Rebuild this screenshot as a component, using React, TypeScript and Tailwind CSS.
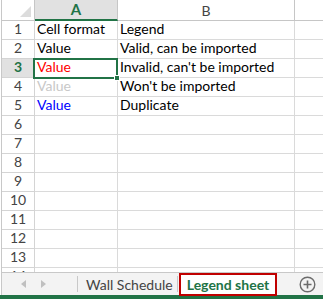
const ROWS: Array<{ a?: string; aColor?: string; b?: string }> = [
  { a: "Cell format", b: "Legend" },
  { a: "Value", b: "Valid, can be imported" },
  { a: "Value", aColor: "text-[#ff0000]", b: "Invalid, can't be imported" },
  { a: "Value", aColor: "text-[#c8c8c8]", b: "Won't be imported" },
  { a: "Value", aColor: "text-[#0000ff]", b: "Duplicate" },
];

const FONT = "font-['Lato','Liberation_Sans',sans-serif]";

function Row({ n }: { n: number }) {
  const r = ROWS[n - 1] || {};
  const active = n === 3;
  return (
    <div className="flex h-[19px] shrink-0">
      <div
        className={`flex w-[33px] items-end justify-center border-b border-r border-[#d4d4d4] pb-[2px] text-[14px] leading-[16px] ${
          active ? "bg-[#e1e1e1] font-bold text-[#217346]" : "text-[#444]"
        }`}
      >
        {n}
      </div>
      <div
        className={`flex w-[83px] items-end overflow-visible whitespace-nowrap border-b border-r border-[#dadada] pb-[2px] pl-[2px] text-[14px] leading-[16px] ${
          r.aColor || "text-black"
        }`}
      >
        {r.a}
      </div>
      <div className="flex w-[177px] items-end whitespace-nowrap border-b border-r border-[#dadada] pb-[2px] pl-[2px] text-[14px] leading-[16px] text-black">
        {r.b}
      </div>
      <div className="flex-1 border-b border-[#dadada]" />
    </div>
  );
}

export default function App() {
  return (
    <div className={`relative h-[299px] w-[323px] overflow-hidden bg-white ${FONT}`}>
      <div className="ml-px h-[272px] overflow-hidden border-l border-[#c8c8c8]">
        {/* column headers */}
        <div className="flex h-[21px]">
          <div className="relative w-[33px] border-b border-r border-[#c6c6c6]">
            <div className="absolute bottom-[3px] right-[3px] h-0 w-0 border-b-[11px] border-l-[11px] border-b-[#dcdcdc] border-l-transparent" />
          </div>
          <div className="flex w-[83px] items-center justify-center border-b-2 border-r border-b-[#217346] border-r-[#c6c6c6] bg-[#e1e1e1] text-[15px] font-bold text-[#217346]">
            A
          </div>
          <div className="flex w-[177px] items-center justify-center border-b border-r border-[#c6c6c6] text-[14px] text-[#444]">
            B
          </div>
          <div className="flex-1 border-b border-[#c6c6c6]" />
        </div>
        {Array.from({ length: 14 }, (_, i) => (
          <Row key={i} n={i + 1} />
        ))}
      </div>

      {/* selected cell A3 */}
      <div className="absolute left-[33px] top-[58px] h-[21px] w-[85px] border-2 border-[#217346]">
        <div className="absolute -bottom-[4px] -right-[4px] h-[6px] w-[6px] border border-white bg-[#217346]" />
      </div>

      {/* sheet tabs */}
      <div className="ml-px flex h-[23px] items-stretch border-l border-t border-[#c8c8c8] bg-[#f3f3f3] text-[14px]">
        <div className="flex w-[75px] items-center pl-[19px] gap-[15px]">
          <div className="h-0 w-0 border-y-[4px] border-r-[5px] border-y-transparent border-r-[#c0c0c0]" />
          <div className="h-0 w-0 border-y-[4px] border-l-[5px] border-y-transparent border-l-[#c0c0c0]" />
        </div>
        <div className="my-[3px] w-px bg-[#c8c8c8]" />
        <div className="flex w-[99px] items-center pl-[8px] text-[#444]">Wall Schedule</div>
        <div className="my-[3px] w-px bg-[#c8c8c8]" />
        <div className="ml-[1px] flex h-[23px] w-[98px] items-center justify-center border-2 border-[#c00000] bg-white font-bold text-[#217346]">
          Legend sheet
        </div>
        <div className="flex flex-1 items-center justify-end pr-[7px]">
          <svg width="17" height="17" viewBox="0 0 17 17">
            <circle cx="8.5" cy="8.5" r="7.3" fill="none" stroke="#6b6b6b" strokeWidth="1.4" />
            <path d="M8.5 4.5v8M4.5 8.5h8" stroke="#6b6b6b" strokeWidth="1.6" />
          </svg>
        </div>
      </div>
      <div className="h-[4px] bg-[#217346]" />
    </div>
  );
}
